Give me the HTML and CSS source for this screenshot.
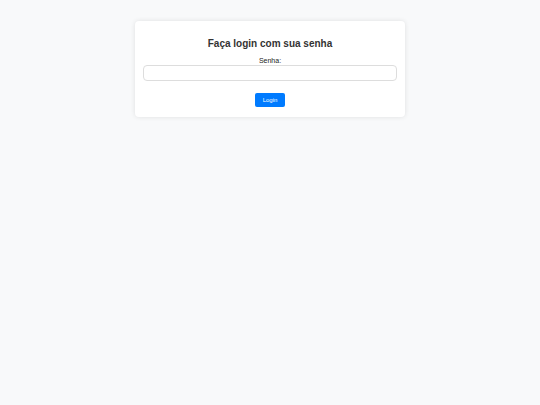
FILE: index.html
```
<!DOCTYPE html>
<html lang="pt">
<head>
<meta charset="utf-8">
<title>Login</title>
<link rel="stylesheet" href="styles.css">
</head>
<body>
<div class="card">
  <h2 class="title">Faça login com sua senha</h2>
  <form class="form">
    <label class="label" for="senha">Senha:</label>
    <input class="input" type="password" id="senha">
    <button class="btn" type="button">Login</button>
  </form>
</div>
</body>
</html>
```
FILE: styles.css
```
html, body { margin: 0; padding: 0; }
body {
  background: #f8f9fa;
  font-family: "Liberation Sans", Arial, sans-serif;
  width: 540px;
  height: 405px;
}
.card {
  box-sizing: border-box;
  width: 270px;
  margin: 21px auto 0;
  background: #fff;
  border-radius: 4px;
  box-shadow: 0 0 5px rgba(0,0,0,0.1);
  padding: 16px 8px 10px;
  text-align: center;
}
.title {
  margin: 0;
  font-size: 10px;
  line-height: 14px;
  font-weight: bold;
  color: #333;
}
.form {
  display: flex;
  flex-direction: column;
  align-items: center;
  margin-top: 6px;
}
.label {
  font-size: 7px;
  line-height: 8px;
  color: #222;
}
.input {
  box-sizing: border-box;
  width: 100%;
  height: 16px;
  margin: 0;
  border: 1px solid #ddd;
  border-radius: 4px;
  padding: 0 4px;
  background: #fff;
  outline: none;
}
.btn {
  margin-top: 12px;
  width: 30px;
  height: 14px;
  padding: 0;
  border: none;
  border-radius: 2px;
  background: #007bff;
  color: #fff;
  font-family: "Liberation Sans", Arial, sans-serif;
  font-size: 6px;
}
```
